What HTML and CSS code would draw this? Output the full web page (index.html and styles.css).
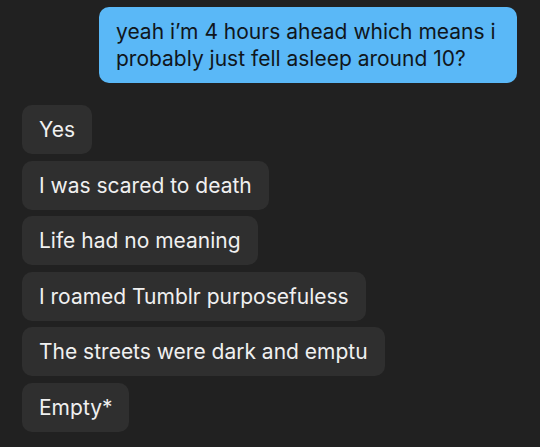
FILE: index.html
```html
<!DOCTYPE html>
<html>
<head>
<meta charset="utf-8">
<link rel="stylesheet" href="styles.css">
</head>
<body>
<div class="chat">
  <div class="row out"><div class="bubble blue">yeah i’m 4 hours ahead which means i probably just fell asleep around 10?</div></div>
  <div class="group">
    <div class="bubble gray">Yes</div>
    <div class="bubble gray">I was scared to death</div>
    <div class="bubble gray">Life had no meaning</div>
    <div class="bubble gray">I roamed Tumblr purposefuless</div>
    <div class="bubble gray">The streets were dark and emptu</div>
    <div class="bubble gray">Empty*</div>
  </div>
</div>
</body>
</html>
```
FILE: styles.css
```css
html, body {
  margin: 0;
  padding: 0;
  background: #212121;
}
body {
  width: 540px;
  height: 447px;
  overflow: hidden;
  font-family: Inter, "Noto Sans", sans-serif;
}
.chat {
  display: flex;
  flex-direction: column;
  padding: 7px 23px 0 22px;
}
.row.out {
  display: flex;
  justify-content: flex-end;
}
.bubble {
  border-radius: 10px;
  box-sizing: border-box;
}
.blue {
  width: 418px;
  background: #5ab8f7;
  color: #10161c;
  font-size: 21px;
  line-height: 27px;
  padding: 11px 17px 11px 17px;
}
.group {
  display: flex;
  flex-direction: column;
  align-items: flex-start;
  gap: 6.6px;
  margin-top: 22px;
}
.gray {
  background: #2f2f2f;
  color: #f0f0f0;
  font-size: 21px;
  line-height: 27px;
  height: 49px;
  padding: 11px 17px;
}
```
